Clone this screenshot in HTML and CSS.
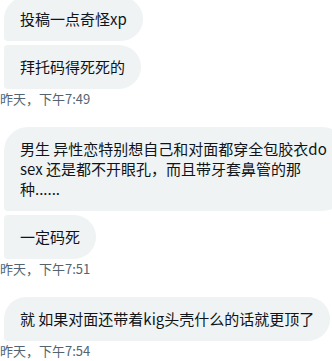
FILE: index.html
```html
<!DOCTYPE html>
<html lang="zh-CN">
<head>
	<meta charset="UTF-8">
	<title>私信</title>
	<link rel="stylesheet" href="styles.css">
</head>
<body>
	<!-- 对话列表 -->
	<div class="chat">
		<div class="group">
			<div class="msg first">投稿一点奇怪xp</div>
			<div class="msg">拜托码得死死的</div>
			<div class="time">昨天，下午7:49</div>
		</div>
		<div class="group">
			<div class="msg first">男生 异性恋特别想自己和对面都穿全包胶衣do sex 还是都不开眼孔，而且带牙套鼻管的那种......</div>
			<div class="msg">一定码死</div>
			<div class="time">昨天，下午7:51</div>
		</div>
		<div class="group">
			<div class="msg first">就 如果对面还带着kig头壳什么的话就更顶了</div>
			<div class="time">昨天，下午7:54</div>
		</div>
	</div>
</body>
</html>
```

FILE: styles.css
```css
html,body{
	margin:0;
	padding:0;
	background:#fff;
}
body{
	font-family:"Noto Sans CJK SC","Noto Sans",sans-serif;
	color:#0f1419;
}
.chat{
	margin-top:-3px;
	width:100%;
	overflow:hidden;
}
.group{
	display:flex;
	flex-direction:column;
	align-items:flex-start;
	gap:4px;
	margin-bottom:20px;
}
.msg{
	margin-left:4px;
	width:max-content;
	max-width:310px;
	flex-shrink:0;
	padding:12px 16px;
	font-size:15px;
	line-height:20px;
	background:#eff3f4;
	border-radius:4px 24px 24px 4px;
}
.msg.first{
	border-radius:24px 24px 24px 4px;
}
.time{
	margin-top:-2px;
	font-size:13px;
	line-height:16px;
	color:#536471;
}
```
